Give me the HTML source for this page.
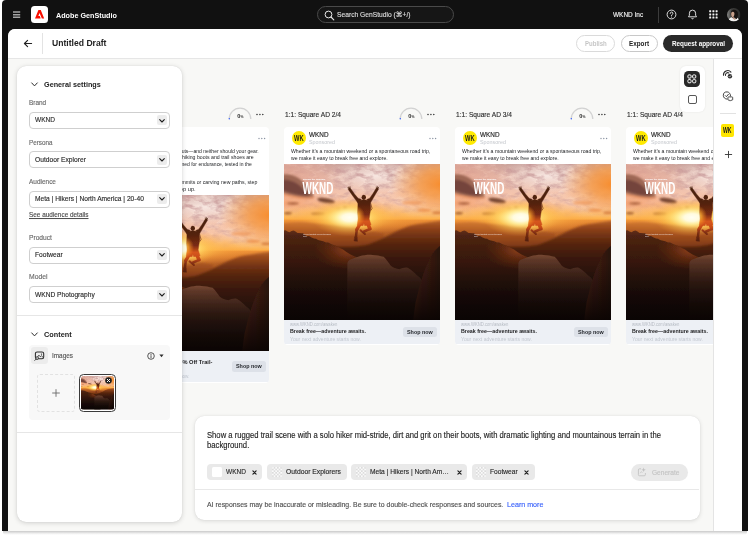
<!DOCTYPE html>
<html lang="en"><head><meta charset="utf-8"><title>Adobe GenStudio</title>
<style>
*{box-sizing:border-box;margin:0;padding:0}
html,body{width:750px;height:535px;overflow:hidden;background:#fff}
body{will-change:transform;font-family:"Liberation Sans",sans-serif;position:relative;-webkit-font-smoothing:antialiased}
.t{position:absolute;white-space:nowrap;transform-origin:0 50%;display:block}
svg{position:absolute;overflow:visible}
.abs{position:absolute}
</style></head>
<body>
<svg width="0" height="0" style="left:0;top:0"><defs><linearGradient id="pSky" x1="0" y1="0" x2="0" y2="1">
<stop offset="0" stop-color="#c7a09a"/><stop offset="0.08" stop-color="#e0b4a6"/><stop offset="0.18" stop-color="#f3c4ae"/>
<stop offset="0.25" stop-color="#f8c09c"/><stop offset="0.29" stop-color="#fcc48c"/><stop offset="0.33" stop-color="#fdbc68"/><stop offset="0.352" stop-color="#fdb04a"/>
<stop offset="0.362" stop-color="#ee9238"/><stop offset="0.40" stop-color="#d87a2e"/><stop offset="0.44" stop-color="#b86226"/><stop offset="0.52" stop-color="#9a4c1e"/><stop offset="0.66" stop-color="#5a2810"/><stop offset="1" stop-color="#24110a"/>
</linearGradient>
<radialGradient id="pSun" cx="0" cy="0" r="1" gradientUnits="userSpaceOnUse" gradientTransform="translate(65.500 53.500) scale(72 18)">
<stop offset="0" stop-color="#fffef4"/><stop offset="0.09" stop-color="#fff8c4"/><stop offset="0.2" stop-color="#ffe27a" stop-opacity=".95"/>
<stop offset="0.4" stop-color="#fdc050" stop-opacity=".7"/><stop offset="0.7" stop-color="#fbaa40" stop-opacity=".3"/><stop offset="1" stop-color="#f8a038" stop-opacity="0"/>
</radialGradient>
<radialGradient id="pSun2" cx="0" cy="0" r="1" gradientUnits="userSpaceOnUse" gradientTransform="translate(65.800 53.500) scale(38 19)">
<stop offset="0" stop-color="#fffef2"/><stop offset="0.2" stop-color="#fffbe0" stop-opacity=".98"/><stop offset="0.36" stop-color="#fff0a0" stop-opacity=".88"/><stop offset="0.6" stop-color="#ffd460" stop-opacity=".5"/><stop offset="1" stop-color="#fca838" stop-opacity="0"/>
</radialGradient>
<radialGradient id="pSun3" cx="0" cy="0" r="1" gradientUnits="userSpaceOnUse" gradientTransform="translate(71.500 52.500) scale(9.500 11)">
<stop offset="0" stop-color="#ffe27a" stop-opacity=".95"/><stop offset="0.4" stop-color="#ffae30" stop-opacity=".75"/><stop offset="1" stop-color="#f88a20" stop-opacity="0"/>
</radialGradient>
<radialGradient id="pGlowTL" cx="0" cy="0" r="1" gradientUnits="userSpaceOnUse" gradientTransform="translate(0 14) scale(62 34)">
<stop offset="0" stop-color="#e09a84" stop-opacity=".75"/><stop offset="0.6" stop-color="#eeb09a" stop-opacity=".4"/><stop offset="1" stop-color="#f0b8a4" stop-opacity="0"/>
</radialGradient>
<radialGradient id="pGlowR" cx="0" cy="0" r="1" gradientUnits="userSpaceOnUse" gradientTransform="translate(156 20) scale(50 34)">
<stop offset="0" stop-color="#f78e30"/><stop offset="0.4" stop-color="#f69a44" stop-opacity=".8"/><stop offset="1" stop-color="#f3a257" stop-opacity="0"/>
</radialGradient>
<radialGradient id="pGlowL" cx="0" cy="0" r="1" gradientUnits="userSpaceOnUse" gradientTransform="translate(-4 39) scale(58 11)">
<stop offset="0" stop-color="#f3a070" stop-opacity=".9"/><stop offset="1" stop-color="#f6a878" stop-opacity="0"/>
</radialGradient>
<radialGradient id="pGlowT" cx="0" cy="0" r="1" gradientUnits="userSpaceOnUse" gradientTransform="translate(92 12) scale(52 18)">
<stop offset="0" stop-color="#fbefeb" stop-opacity=".85"/><stop offset="1" stop-color="#fbefeb" stop-opacity="0"/>
</radialGradient>
<radialGradient id="pGlowP" cx="0" cy="0" r="1" gradientUnits="userSpaceOnUse" gradientTransform="translate(122 36) scale(40 14)">
<stop offset="0" stop-color="#f8cdb6" stop-opacity=".8"/><stop offset="1" stop-color="#f8cdb6" stop-opacity="0"/>
</radialGradient>
<linearGradient id="pRidgeR" x1="0" y1="56" x2="0" y2="116" gradientUnits="userSpaceOnUse">
<stop offset="0" stop-color="#b8662e"/><stop offset="0.1" stop-color="#9a4a1d"/><stop offset="0.24" stop-color="#763514"/><stop offset="0.4" stop-color="#56250e"/><stop offset="0.65" stop-color="#381809"/><stop offset="1" stop-color="#2a130a"/>
</linearGradient>
<linearGradient id="pRidgeM" x1="0" y1="57" x2="0" y2="100" gradientUnits="userSpaceOnUse">
<stop offset="0" stop-color="#d07830"/><stop offset="0.3" stop-color="#a4501e"/><stop offset="0.65" stop-color="#703012"/><stop offset="1" stop-color="#4a200e"/>
</linearGradient>
<linearGradient id="pRidgeL" x1="0" y1="64" x2="0" y2="156" gradientUnits="userSpaceOnUse">
<stop offset="0" stop-color="#6c3419"/><stop offset="0.08" stop-color="#4e2412"/><stop offset="0.3" stop-color="#3a1a0e"/><stop offset="0.7" stop-color="#26110a"/><stop offset="1" stop-color="#170a07"/>
</linearGradient>
<radialGradient id="pRidgeLw" cx="0" cy="0" r="1" gradientUnits="userSpaceOnUse" gradientTransform="translate(64 86) scale(34 20)">
<stop offset="0" stop-color="#a0481a" stop-opacity=".8"/><stop offset="0.5" stop-color="#8a3a14" stop-opacity=".4"/><stop offset="1" stop-color="#7a3414" stop-opacity="0"/>
</radialGradient>
<linearGradient id="pRock" x1="0" y1="90" x2="0" y2="156" gradientUnits="userSpaceOnUse">
<stop offset="0" stop-color="#7a4a33"/><stop offset="0.1" stop-color="#5c3627"/><stop offset="0.45" stop-color="#3c2218"/><stop offset="1" stop-color="#1c0f0b"/>
</linearGradient>
<linearGradient id="pMan" x1="0" y1="22" x2="0" y2="79" gradientUnits="userSpaceOnUse">
<stop offset="0" stop-color="#4a2210"/><stop offset="0.3" stop-color="#522110"/><stop offset="0.5" stop-color="#7a2c12"/><stop offset="0.62" stop-color="#d6561c"/><stop offset="0.72" stop-color="#c84a18"/><stop offset="0.82" stop-color="#7e2e12"/><stop offset="1" stop-color="#4a1c0e"/>
</linearGradient>
<linearGradient id="pRockR" x1="128" y1="0" x2="156" y2="0" gradientUnits="userSpaceOnUse">
<stop offset="0" stop-color="#70361e"/><stop offset="0.3" stop-color="#452014"/><stop offset="1" stop-color="#28130d"/>
</linearGradient>
<linearGradient id="pDark" x1="0" y1="98" x2="0" y2="156" gradientUnits="userSpaceOnUse">
<stop offset="0" stop-color="#0a0403" stop-opacity="0"/><stop offset="0.5" stop-color="#0a0403" stop-opacity=".48"/><stop offset="1" stop-color="#0a0403" stop-opacity=".93"/>
</linearGradient>
<filter id="pB1" x="-20%" y="-20%" width="140%" height="140%"><feGaussianBlur stdDeviation="0.900"/></filter>
<filter id="pB2" x="-20%" y="-20%" width="140%" height="140%"><feGaussianBlur stdDeviation="0.800"/></filter>
<filter id="pB3" x="-20%" y="-20%" width="140%" height="140%"><feGaussianBlur stdDeviation="0.280"/></filter>
<filter id="pTex" x="0" y="0" width="100%" height="100%" color-interpolation-filters="sRGB">
<feTurbulence type="fractalNoise" baseFrequency="0.09 0.17" numOctaves="4" seed="7"/>
<feColorMatrix type="matrix" values="0 0 0 0 1  0 0 0 0 0.92  0 0 0 0 0.88  2.000 0 0 0 -1.000"/>
</filter>
<filter id="pTexD" x="0" y="0" width="100%" height="100%" color-interpolation-filters="sRGB">
<feTurbulence type="fractalNoise" baseFrequency="0.10 0.20" numOctaves="4" seed="23"/>
<feColorMatrix type="matrix" values="0 0 0 0 0.780  0 0 0 0 0.600  0 0 0 0 0.600  0 2.400 0 0 -1.050"/>
</filter>
<linearGradient id="pFade" x1="0" y1="0" x2="0" y2="1"><stop offset="0" stop-color="#fff"/><stop offset="0.6" stop-color="#fff" stop-opacity=".6"/><stop offset="1" stop-color="#fff" stop-opacity="0"/></linearGradient>
<mask id="pSkyMask" maskUnits="userSpaceOnUse" x="0" y="0" width="156" height="56"><rect width="156" height="56" fill="url(#pFade)"/></mask>
<clipPath id="pClip"><rect width="156" height="156"/></clipPath>
<path id="pRL" d="M-2 66.800L1.500 66.200L3.500 67.600L5.500 68.200L7.500 67L9.500 66.400L11.500 67.600L13.500 68.900L15 69L17 69.300L19 69.200L21 71L23 72.200L25 72.100L27 73.300L30 74.500L32 74.700L34 76L37 76.800L39 77.300L42 78.400L44 78.600L47 80L50 81.200L53 82.300L56 84L59 85.600L62 87.800L66 90.200L72 93L92 104L92 158L-2 158z"/>
<g id="pManS" stroke-linecap="round" stroke-linejoin="round">
<ellipse cx="79.700" cy="33.300" rx="2.200" ry="2.600" stroke="none"/>
<path d="M64.600 23.600L66.500 24.500L70.400 30L74 34.200L77.200 35.600L74.300 39.800L71.500 35.800L67.500 30.200L64.200 25.400Z" stroke-width="0.400"/>
<path d="M93.900 23.400L92 24.300L88.600 30L85.600 34.200L82.600 35.600L85.900 39.600L88.300 35.600L91.500 30L94.400 25.200Z" stroke-width="0.400"/>
<path d="M63.800 23.300l.9 1.100M65 22.600l.5 1.400M66.300 22.900l-.1 1.300M94.700 23.100l-.9 1.100M93.500 22.400l-.5 1.400M92.200 22.700l.1 1.300" fill="none" stroke-width="0.550"/>
<path d="M74 37.200C76.500 35.500 83 35.500 85.900 37.200L86.500 42L86.700 44.500L85.700 50L85.100 54.900L87 60.800L80.600 61.700L79.800 59.600L79 61.700L73.200 61.400L74.200 54.900L73.700 48Z" stroke-width="0.400"/>
<path d="M76.300 59.500L72.700 65.700" fill="none" stroke-width="3.300"/>
<path d="M72.700 65.700L71.800 73.500" fill="none" stroke-width="2.500"/>
<path d="M70.500 73L70.100 76.900L73.300 77.300L73.100 73.400Z" stroke-width="0.500"/>
<path d="M83.500 59.500L85.900 64.700" fill="none" stroke-width="3.500"/>
<path d="M85.900 64.900L80 67.500" fill="none" stroke-width="2.600"/>
<path d="M76.400 66.200L80.800 70" fill="none" stroke-width="2"/>
<path d="M86.600 39.500L88 44.500L87 46.200" fill="none" stroke-width="0.600"/>
</g>
<mask id="pManM" maskUnits="userSpaceOnUse" x="60" y="20" width="40" height="60"><g fill="#fff" stroke="#fff"><use href="#pManS"/></g></mask>
<g id="photo" clip-path="url(#pClip)">
<rect width="156" height="156" fill="url(#pSky)"/>
<rect width="156" height="70" fill="url(#pGlowT)"/>
<rect width="156" height="70" fill="url(#pGlowP)"/>
<g mask="url(#pSkyMask)"><rect width="156" height="56" filter="url(#pTex)"/><rect width="156" height="56" filter="url(#pTexD)"/></g>
<rect width="156" height="80" fill="url(#pGlowR)"/>
<rect width="70" height="60" fill="url(#pGlowTL)"/>
<rect width="80" height="80" fill="url(#pGlowL)"/>
<g filter="url(#pB1)">
<path d="M-3 11C3 9 10 11 16 15C21 19 27 26 30 32.500C22 35.500 9 32 -3 28.500z" fill="#96604e" opacity=".9"/><path d="M-3 16C3 15 10 17 15 21C19 24.500 23 28.500 26 31.500C18 32.500 8 29.500 -3 26z" fill="#6e4038" opacity=".85"/><path d="M-3 29C6 31.500 18 34 30 33L30 34.500C20 36.500 8 34 -3 31z" fill="#e88a54" opacity=".7"/>
<ellipse cx="42" cy="36.600" rx="9" ry="2.400" fill="#74432f" opacity=".95" transform="rotate(10 42 36.600)"/>
<ellipse cx="34" cy="49.800" rx="7" ry="1.400" fill="#8e4c26" opacity=".9"/>
<ellipse cx="4" cy="49.300" rx="4" ry="1.300" fill="#8e4c26" opacity=".85"/>
<ellipse cx="9" cy="39.500" rx="6" ry="1.400" fill="#a05834" opacity=".75"/>
<ellipse cx="61" cy="44" rx="2.200" ry="1.700" fill="#a05830" opacity=".8"/>
<ellipse cx="54.500" cy="45.500" rx="2" ry="1.100" fill="#aa6030" opacity=".7"/>
<ellipse cx="128" cy="38.800" rx="10" ry="1.800" fill="#ee985c" opacity=".75"/>
<ellipse cx="140" cy="46.200" rx="7" ry="1.500" fill="#ea8c48" opacity=".8"/>
<ellipse cx="153" cy="48.800" rx="5" ry="1.300" fill="#cc7034" opacity=".8"/>
</g>
<rect width="156" height="120" fill="url(#pSun)"/>
<g filter="url(#pB2)">
<path d="M-2 59.500C8 58 18 57.500 28 59C40 60.500 52 61.500 70 63.500L100 70L100 100L-2 100z" fill="url(#pRidgeM)" opacity=".85"/>
<path d="M158 56.500C148 57.500 140 59.500 132 60.500C124 61.500 116 65.500 108 69.500C100 73.500 92 77.500 84 80.500C74 83 60 83.500 40 82L40 125L158 125z" fill="url(#pRidgeR)"/>
</g>
<g filter="url(#pB3)"><use href="#pRL" fill="url(#pRidgeL)"/><use href="#pRL" fill="url(#pRidgeLw)"/></g>
<g filter="url(#pB3)">
<path d="M63 158L63.300 100C63.500 97 64.500 96 66.500 95.400C69.500 94.300 72.500 93.200 75.500 92.300C79.500 91.200 84 90.600 88 90.900C92 91.200 96 91.600 99.500 92.800C102 94.800 104 98.200 106.500 101.600C109 103.700 112 104.900 115.500 105.200C118 104.200 121 102.800 124 103.900C127 105.500 130 108.500 133 111.400C136 113 138 116 139 119L139 158z" fill="url(#pRock)"/>
<path d="M158 80.500C154 83 150 87 147 92C144 97.500 141 104.500 138.500 112C136 120 133.500 130 131.500 138C130.500 145 129.500 151 129 158L158 158z" fill="url(#pRockR)"/>
</g>
<rect y="98" width="156" height="58" fill="url(#pDark)"/>
<rect x="26" y="32" width="80" height="44" fill="url(#pSun2)"/>
<g fill="url(#pMan)" stroke="url(#pMan)" filter="url(#pB3)"><use href="#pManS"/></g>
<rect x="62" y="38" width="28" height="30" fill="url(#pSun3)" mask="url(#pManM)"/>
</g>
<g id="overlay" fill="#fff" font-family="Liberation Sans, sans-serif">
<text x="19" y="15.800" font-size="2.400" font-weight="700" textLength="22.600" lengthAdjust="spacingAndGlyphs">Escape the ordinary.</text>
<text x="18.600" y="30.500" font-size="15.800" font-weight="700" textLength="30.600" lengthAdjust="spacingAndGlyphs">WKND</text>
<text x="19" y="71.100" font-size="1.700" textLength="28" lengthAdjust="spacingAndGlyphs" opacity=".85">The next great hit your next weekend.</text>
<text x="19" y="73.300" font-size="1.700" textLength="4" lengthAdjust="spacingAndGlyphs" opacity=".85">Ping.</text>
</g>
</defs></svg>
<div style="position:absolute;left:3px;top:531px;width:744px;height:4px;background:linear-gradient(#c9c9c9,#f4f4f4 70%,#fff);border-radius:0 0 3px 3px"></div>
<div style="position:absolute;left:2px;top:0px;width:746px;height:531px;background:#111;border-radius:4px 4px 0 0"></div>
<div class="panel" style="position:absolute;left:8px;top:29px;width:734px;height:502px;background:#f8f8f6;border-radius:7px 7px 0 0;overflow:hidden"><svg style="left:219.8px;top:77.8px;" width="24" height="13" viewBox="0 0 24 13"><path d="M1.2 12 A10.8 10.8 0 0 1 22.8 12" fill="none" stroke="#d2d2d2" stroke-width="1.25"/><circle cx="1.3" cy="11.7" r="0.75" fill="#3b63fb"/></svg><span class="t" style="left:229.20000000000002px;top:83px;font-size:5.6px;line-height:6px;height:6px;color:#2a2a2a;font-weight:700;transform:translateY(0.66px);">0</span><span class="t" style="left:232.4px;top:85px;font-size:3.3px;line-height:4px;height:4px;color:#2a2a2a;font-weight:700;transform:translateY(0.86px);">%</span><svg style="left:248.3px;top:83.5px;" width="9" height="3" viewBox="0 0 9 3"><circle cx="1.0" cy="1.5" r="0.8" fill="#3c3c3c"/><circle cx="3.9" cy="1.5" r="0.8" fill="#3c3c3c"/><circle cx="6.8" cy="1.5" r="0.8" fill="#3c3c3c"/></svg><div style="position:absolute;left:105px;top:98px;width:156.2px;height:255.5px;background:#fff;border-radius:4px;overflow:hidden"><div style="position:absolute;left:0px;top:68.3px;width:156.2px;height:156px;"><svg style="left:0;top:0" width="156.2" height="156" viewBox="0 0 156 156" preserveAspectRatio="none"><use href="#photo"/></svg></div><div style="position:absolute;left:0px;top:224.3px;width:156.2px;height:31.2px;background:#edf0f5"></div></div><svg style="left:250px;top:108.0px;" width="9" height="3" viewBox="0 0 9 3"><circle cx="1.0" cy="1.5" r="0.7" fill="#8a93a2"/><circle cx="3.8" cy="1.5" r="0.7" fill="#8a93a2"/><circle cx="6.6" cy="1.5" r="0.7" fill="#8a93a2"/></svg><span class="t" style="left:112.3px;top:118px;font-size:5.75px;line-height:6px;height:6px;color:#1c1e21;transform:translateY(1.00px) scaleX(0.8766);">Mountains don’t take shortcuts—and neither should your gear.</span><span class="t" style="left:112.3px;top:125px;font-size:5.75px;line-height:6px;height:6px;color:#1c1e21;transform:translateY(0.40px) scaleX(0.9015);">Our all-terrain collection of hiking boots and trail shoes are</span><span class="t" style="left:112.3px;top:131px;font-size:5.75px;line-height:6px;height:6px;color:#1c1e21;transform:translateY(0.80px) scaleX(0.8637);">built for the long haul. Designed for endurance, tested in the</span><span class="t" style="left:112.3px;top:138px;font-size:5.75px;line-height:6px;height:6px;color:#1c1e21;transform:translateY(0.19px) scaleX(0.9302);">wild.</span><span class="t" style="left:112.3px;top:150px;font-size:5.75px;line-height:6px;height:6px;color:#1c1e21;transform:translateY(0.30px) scaleX(0.9025);">Whether you’re chasing summits or carving new paths, step</span><span class="t" style="left:112.3px;top:156px;font-size:5.75px;line-height:6px;height:6px;color:#1c1e21;transform:translateY(0.69px) scaleX(0.9866);">into the unknown and step up.</span><span class="t" style="left:110.9px;top:330px;font-size:5.9px;line-height:6px;height:6px;color:#1d1d1f;font-weight:700;transform:scaleX(0.9625);">Step Into Adventure: 15% Off Trail-</span><span class="t" style="left:110.9px;top:337px;font-size:5.9px;line-height:6px;height:6px;color:#1d1d1f;font-weight:700;transform:scaleX(0.8690);">Ready Gear</span><span class="t" style="left:110.9px;top:344px;font-size:5.4px;line-height:6px;height:6px;color:#c3c8d0;transform:translateY(0.30px) scaleX(0.8540);">Gear up for the trail and save now.</span><div style="position:absolute;left:224.2px;top:331.8px;width:33.8px;height:10.8px;background:#dde1e8;border-radius:2.5px"></div><span class="t" style="left:228.2px;top:334px;font-size:5.63px;line-height:6px;height:6px;color:#25282d;font-weight:700;transform:translateY(0.16px) scaleX(0.9593);">Shop now</span><span class="t" style="left:276.7px;top:81px;font-size:8.1px;line-height:9px;height:9px;color:#2c2c2c;-webkit-text-stroke:0.14px;transform:translateY(0.31px) scaleX(0.8181);">1:1: Square AD 2/4</span><svg style="left:390.8px;top:77.8px;" width="24" height="13" viewBox="0 0 24 13"><path d="M1.2 12 A10.8 10.8 0 0 1 22.8 12" fill="none" stroke="#d2d2d2" stroke-width="1.25"/><circle cx="1.3" cy="11.7" r="0.75" fill="#3b63fb"/></svg><span class="t" style="left:400.2px;top:83px;font-size:5.6px;line-height:6px;height:6px;color:#2a2a2a;font-weight:700;transform:translateY(0.66px);">0</span><span class="t" style="left:403.40000000000003px;top:85px;font-size:3.3px;line-height:4px;height:4px;color:#2a2a2a;font-weight:700;transform:translateY(0.86px);">%</span><svg style="left:419.3px;top:83.5px;" width="9" height="3" viewBox="0 0 9 3"><circle cx="1.0" cy="1.5" r="0.8" fill="#3c3c3c"/><circle cx="3.9" cy="1.5" r="0.8" fill="#3c3c3c"/><circle cx="6.8" cy="1.5" r="0.8" fill="#3c3c3c"/></svg><div style="position:absolute;left:276px;top:98px;width:156.2px;height:217.5px;background:#fff;border-radius:4px;overflow:hidden"><div style="position:absolute;left:0px;top:37.3px;width:156.2px;height:156px;"><svg style="left:0;top:0" width="156.2" height="156" viewBox="0 0 156 156" preserveAspectRatio="none"><use href="#photo"/><use href="#overlay"/></svg></div><div style="position:absolute;left:0px;top:193.3px;width:156.2px;height:24.2px;background:#edf0f5"></div></div><svg style="left:283.5px;top:102px;" width="14" height="14" viewBox="0 0 14 14"><circle cx="7" cy="7" r="7" fill="#ffea00"/></svg><span class="t" style="left:286.4px;top:104px;font-size:9.3px;line-height:10px;height:10px;color:#1a1a1a;font-weight:700;transform:translateY(0.32px) scaleX(0.6196);">WK</span><span class="t" style="left:300.8px;top:102px;font-size:7.05px;line-height:7px;height:7px;color:#1c1c1c;-webkit-text-stroke:0.14px;transform:translateY(0.13px) scaleX(0.9053);">WKND</span><span class="t" style="left:300.8px;top:110px;font-size:5.94px;line-height:6px;height:6px;color:#c4c7cc;transform:translateY(0.34px) scaleX(0.9049);">Sponsored</span><svg style="left:421px;top:108.0px;" width="9" height="3" viewBox="0 0 9 3"><circle cx="1.0" cy="1.5" r="0.7" fill="#8a93a2"/><circle cx="3.8" cy="1.5" r="0.7" fill="#8a93a2"/><circle cx="6.6" cy="1.5" r="0.7" fill="#8a93a2"/></svg><span class="t" style="left:283.3px;top:118px;font-size:5.71px;line-height:6px;height:6px;color:#1c1e21;transform:translateY(0.78px) scaleX(0.9049);">Whether it’s a mountain weekend or a spontaneous road trip,</span><span class="t" style="left:283.3px;top:125px;font-size:5.68px;line-height:6px;height:6px;color:#1c1e21;transform:translateY(0.58px) scaleX(0.9044);">we make it easy to break free and explore.</span><span class="t" style="left:281.9px;top:293px;font-size:4.63px;line-height:5px;height:5px;color:#b7bcc4;transform:scaleX(0.9050);">www.WKND.com/awaken</span><span class="t" style="left:281.9px;top:299px;font-size:5.54px;line-height:6px;height:6px;color:#1d1d1f;font-weight:700;transform:translateY(0.34px) scaleX(0.9604);">Break free—adventure awaits.</span><span class="t" style="left:281.9px;top:306px;font-size:5.62px;line-height:6px;height:6px;color:#c3c8d0;transform:translateY(0.76px) scaleX(0.9042);">Your next adventure starts now.</span><div style="position:absolute;left:395.2px;top:297.6px;width:33.8px;height:10.8px;background:#dde1e8;border-radius:2.5px"></div><span class="t" style="left:399.2px;top:300px;font-size:5.63px;line-height:6px;height:6px;color:#25282d;font-weight:700;transform:translateY(0.16px) scaleX(0.9593);">Shop now</span><span class="t" style="left:447.7px;top:81px;font-size:8.1px;line-height:9px;height:9px;color:#2c2c2c;-webkit-text-stroke:0.14px;transform:translateY(0.31px) scaleX(0.8181);">1:1: Square AD 3/4</span><svg style="left:561.8px;top:77.8px;" width="24" height="13" viewBox="0 0 24 13"><path d="M1.2 12 A10.8 10.8 0 0 1 22.8 12" fill="none" stroke="#d2d2d2" stroke-width="1.25"/><circle cx="1.3" cy="11.7" r="0.75" fill="#3b63fb"/></svg><span class="t" style="left:571.1999999999999px;top:83px;font-size:5.6px;line-height:6px;height:6px;color:#2a2a2a;font-weight:700;transform:translateY(0.66px);">0</span><span class="t" style="left:574.4px;top:85px;font-size:3.3px;line-height:4px;height:4px;color:#2a2a2a;font-weight:700;transform:translateY(0.86px);">%</span><svg style="left:590.3px;top:83.5px;" width="9" height="3" viewBox="0 0 9 3"><circle cx="1.0" cy="1.5" r="0.8" fill="#3c3c3c"/><circle cx="3.9" cy="1.5" r="0.8" fill="#3c3c3c"/><circle cx="6.8" cy="1.5" r="0.8" fill="#3c3c3c"/></svg><div style="position:absolute;left:447px;top:98px;width:156.2px;height:217.5px;background:#fff;border-radius:4px;overflow:hidden"><div style="position:absolute;left:0px;top:37.3px;width:156.2px;height:156px;"><svg style="left:0;top:0" width="156.2" height="156" viewBox="0 0 156 156" preserveAspectRatio="none"><use href="#photo"/><use href="#overlay"/></svg></div><div style="position:absolute;left:0px;top:193.3px;width:156.2px;height:24.2px;background:#edf0f5"></div></div><svg style="left:454.5px;top:102px;" width="14" height="14" viewBox="0 0 14 14"><circle cx="7" cy="7" r="7" fill="#ffea00"/></svg><span class="t" style="left:457.4px;top:104px;font-size:9.3px;line-height:10px;height:10px;color:#1a1a1a;font-weight:700;transform:translateY(0.32px) scaleX(0.6196);">WK</span><span class="t" style="left:471.8px;top:102px;font-size:7.05px;line-height:7px;height:7px;color:#1c1c1c;-webkit-text-stroke:0.14px;transform:translateY(0.13px) scaleX(0.9053);">WKND</span><span class="t" style="left:471.8px;top:110px;font-size:5.94px;line-height:6px;height:6px;color:#c4c7cc;transform:translateY(0.34px) scaleX(0.9049);">Sponsored</span><svg style="left:592px;top:108.0px;" width="9" height="3" viewBox="0 0 9 3"><circle cx="1.0" cy="1.5" r="0.7" fill="#8a93a2"/><circle cx="3.8" cy="1.5" r="0.7" fill="#8a93a2"/><circle cx="6.6" cy="1.5" r="0.7" fill="#8a93a2"/></svg><span class="t" style="left:454.3px;top:118px;font-size:5.71px;line-height:6px;height:6px;color:#1c1e21;transform:translateY(0.78px) scaleX(0.9049);">Whether it’s a mountain weekend or a spontaneous road trip,</span><span class="t" style="left:454.3px;top:125px;font-size:5.68px;line-height:6px;height:6px;color:#1c1e21;transform:translateY(0.58px) scaleX(0.9044);">we make it easy to break free and explore.</span><span class="t" style="left:452.9px;top:293px;font-size:4.63px;line-height:5px;height:5px;color:#b7bcc4;transform:scaleX(0.9050);">www.WKND.com/awaken</span><span class="t" style="left:452.9px;top:299px;font-size:5.54px;line-height:6px;height:6px;color:#1d1d1f;font-weight:700;transform:translateY(0.34px) scaleX(0.9604);">Break free—adventure awaits.</span><span class="t" style="left:452.9px;top:306px;font-size:5.62px;line-height:6px;height:6px;color:#c3c8d0;transform:translateY(0.76px) scaleX(0.9042);">Your next adventure starts now.</span><div style="position:absolute;left:566.2px;top:297.6px;width:33.8px;height:10.8px;background:#dde1e8;border-radius:2.5px"></div><span class="t" style="left:570.2px;top:300px;font-size:5.63px;line-height:6px;height:6px;color:#25282d;font-weight:700;transform:translateY(0.16px) scaleX(0.9593);">Shop now</span><span class="t" style="left:618.7px;top:81px;font-size:8.1px;line-height:9px;height:9px;color:#2c2c2c;-webkit-text-stroke:0.14px;transform:translateY(0.31px) scaleX(0.8181);">1:1: Square AD 4/4</span><svg style="left:732.8px;top:77.8px;" width="24" height="13" viewBox="0 0 24 13"><path d="M1.2 12 A10.8 10.8 0 0 1 22.8 12" fill="none" stroke="#d2d2d2" stroke-width="1.25"/><circle cx="1.3" cy="11.7" r="0.75" fill="#3b63fb"/></svg><span class="t" style="left:742.1999999999999px;top:83px;font-size:5.6px;line-height:6px;height:6px;color:#2a2a2a;font-weight:700;transform:translateY(0.66px);">0</span><span class="t" style="left:745.4px;top:85px;font-size:3.3px;line-height:4px;height:4px;color:#2a2a2a;font-weight:700;transform:translateY(0.86px);">%</span><svg style="left:761.3px;top:83.5px;" width="9" height="3" viewBox="0 0 9 3"><circle cx="1.0" cy="1.5" r="0.8" fill="#3c3c3c"/><circle cx="3.9" cy="1.5" r="0.8" fill="#3c3c3c"/><circle cx="6.8" cy="1.5" r="0.8" fill="#3c3c3c"/></svg><div style="position:absolute;left:618px;top:98px;width:156.2px;height:217.5px;background:#fff;border-radius:4px;overflow:hidden"><div style="position:absolute;left:0px;top:37.3px;width:156.2px;height:156px;"><svg style="left:0;top:0" width="156.2" height="156" viewBox="0 0 156 156" preserveAspectRatio="none"><use href="#photo"/><use href="#overlay"/></svg></div><div style="position:absolute;left:0px;top:193.3px;width:156.2px;height:24.2px;background:#edf0f5"></div></div><svg style="left:625.5px;top:102px;" width="14" height="14" viewBox="0 0 14 14"><circle cx="7" cy="7" r="7" fill="#ffea00"/></svg><span class="t" style="left:628.4px;top:104px;font-size:9.3px;line-height:10px;height:10px;color:#1a1a1a;font-weight:700;transform:translateY(0.32px) scaleX(0.6196);">WK</span><span class="t" style="left:642.8px;top:102px;font-size:7.05px;line-height:7px;height:7px;color:#1c1c1c;-webkit-text-stroke:0.14px;transform:translateY(0.13px) scaleX(0.9053);">WKND</span><span class="t" style="left:642.8px;top:110px;font-size:5.94px;line-height:6px;height:6px;color:#c4c7cc;transform:translateY(0.34px) scaleX(0.9049);">Sponsored</span><svg style="left:763px;top:108.0px;" width="9" height="3" viewBox="0 0 9 3"><circle cx="1.0" cy="1.5" r="0.7" fill="#8a93a2"/><circle cx="3.8" cy="1.5" r="0.7" fill="#8a93a2"/><circle cx="6.6" cy="1.5" r="0.7" fill="#8a93a2"/></svg><span class="t" style="left:625.3px;top:118px;font-size:5.71px;line-height:6px;height:6px;color:#1c1e21;transform:translateY(0.78px) scaleX(0.9049);">Whether it’s a mountain weekend or a spontaneous road trip,</span><span class="t" style="left:625.3px;top:125px;font-size:5.68px;line-height:6px;height:6px;color:#1c1e21;transform:translateY(0.58px) scaleX(0.9044);">we make it easy to break free and explore.</span><span class="t" style="left:623.9px;top:293px;font-size:4.63px;line-height:5px;height:5px;color:#b7bcc4;transform:scaleX(0.9050);">www.WKND.com/awaken</span><span class="t" style="left:623.9px;top:299px;font-size:5.54px;line-height:6px;height:6px;color:#1d1d1f;font-weight:700;transform:translateY(0.34px) scaleX(0.9604);">Break free—adventure awaits.</span><span class="t" style="left:623.9px;top:306px;font-size:5.62px;line-height:6px;height:6px;color:#c3c8d0;transform:translateY(0.76px) scaleX(0.9042);">Your next adventure starts now.</span><div style="position:absolute;left:737.2px;top:297.6px;width:33.8px;height:10.8px;background:#dde1e8;border-radius:2.5px"></div><span class="t" style="left:741.2px;top:300px;font-size:5.63px;line-height:6px;height:6px;color:#25282d;font-weight:700;transform:translateY(0.16px) scaleX(0.9593);">Shop now</span><div style="position:absolute;left:0px;top:0px;width:734px;height:29.5px;background:#fff;border-bottom:1px solid #e6e6e6"></div><svg style="left:15px;top:10px;" width="10" height="9" viewBox="0 0 10 9"><path d="M8.6 4.5H1.6M4.6 1.3L1.4 4.5L4.6 7.7" fill="none" stroke="#222" stroke-width="1.1" stroke-linecap="round" stroke-linejoin="round"/></svg><div style="position:absolute;left:34.3px;top:4px;width:1px;height:20.5px;background:#e3e3e3"></div><span class="t" style="left:44px;top:9px;font-size:8.96px;line-height:10px;height:10px;color:#222;font-weight:700;transform:translateY(0.43px) scaleX(0.9604);">Untitled Draft</span><div style="position:absolute;left:568.3px;top:6.200000000000003px;width:39px;height:16.4px;border:1px solid #dadada;border-radius:9px;background:#fff"></div><span class="t" style="left:576.9px;top:10px;font-size:6.29px;line-height:7px;height:7px;color:#c6c6c6;font-weight:700;transform:translateY(0.54px) scaleX(0.9597);">Publish</span><div style="position:absolute;left:612.8px;top:6.200000000000003px;width:37px;height:16.4px;border:1px solid #c8c8c8;border-radius:9px;background:#fff"></div><span class="t" style="left:621.3px;top:10px;font-size:6.58px;line-height:7px;height:7px;color:#222;font-weight:700;transform:translateY(0.61px) scaleX(0.9597);">Export</span><div style="position:absolute;left:655px;top:6.200000000000003px;width:70.4px;height:16.4px;border-radius:9px;background:#292929"></div><span class="t" style="left:663.8px;top:10px;font-size:6.58px;line-height:7px;height:7px;color:#fff;font-weight:700;transform:translateY(0.61px) scaleX(0.9599);">Request approval</span><div style="position:absolute;left:704.5px;top:29.5px;width:29.5px;height:473px;background:#fff;border-left:1px solid #e4e4e4"></div><svg style="left:713px;top:38px;" width="14" height="13" viewBox="0 0 14 13"><path d="M2.5 8.2A4.2 4.2 0 0 1 9.9 5.1" fill="none" stroke="#2c2c2c" stroke-width="1.15" stroke-linecap="round"/><path d="M4.5 8.4A2.3 2.3 0 0 1 7.9 6.0" fill="none" stroke="#2c2c2c" stroke-width="1.1" stroke-linecap="round"/><circle cx="8.9" cy="9.3" r="2.2" fill="#2c2c2c"/><path d="M7.9 9.4l0.7 0.7l1.3-1.5" fill="none" stroke="#fff" stroke-width="0.65" stroke-linecap="round" stroke-linejoin="round"/></svg><svg style="left:713px;top:61px;" width="14" height="13" viewBox="0 0 14 13"><path d="M9.5 5.9A3.6 3.6 0 1 0 5.9 9.1" fill="none" stroke="#2c2c2c" stroke-width="0.9" stroke-linecap="round"/><path d="M4.3 5.6l1.1 1.1l2-2.4" fill="none" stroke="#2c2c2c" stroke-width="0.9" stroke-linecap="round" stroke-linejoin="round"/><path d="M7.7 6.9h3.2a0.8 0.8 0 0 1 .8 .8v1.7a0.8 0.8 0 0 1 -.8 .8h-0.9l-0.8 0.9l-0.7-0.9h-0.8a0.8 0.8 0 0 1 -.8-.8v-1.700a0.8 0.8 0 0 1 .8-.8z" fill="#fff" stroke="#2c2c2c" stroke-width="0.85" stroke-linejoin="round"/></svg><div style="position:absolute;left:711.5px;top:84px;width:16.5px;height:1px;background:#e2e2e2"></div><div style="position:absolute;left:713.2px;top:94.6px;width:13px;height:13px;background:#ffe600;border-radius:2px"></div><span class="t" style="left:715.4px;top:96px;font-size:8.4px;line-height:10px;height:10px;color:#1a1a1a;font-weight:700;transform:translateY(0.08px) scaleX(0.6145);">WK</span><svg style="left:715.5px;top:120.5px;" width="9" height="9" viewBox="0 0 9 9"><path d="M4.5 1.3V7.7M1.3 4.5H7.7" stroke="#333" stroke-width="0.9" stroke-linecap="round"/></svg><div style="position:absolute;left:671.6px;top:36.8px;width:25.2px;height:46.2px;background:#fff;border-radius:6px;box-shadow:0 0 2px rgba(0,0,0,.09)"></div><div style="position:absolute;left:676.2px;top:41.7px;width:16.3px;height:16.2px;background:#292929;border-radius:4.5px"></div><svg style="left:679.4px;top:44.900000000000006px;" width="10" height="10" viewBox="0 0 10 10"><rect x="0.9" y="0.9" width="3.2" height="3.2" rx="1" fill="none" stroke="#fff" stroke-width="1"/><rect x="0.9" y="5.6" width="3.2" height="3.2" rx="1" fill="none" stroke="#fff" stroke-width="1"/><rect x="5.6" y="0.9" width="3.2" height="3.2" rx="1" fill="none" stroke="#fff" stroke-width="1"/><rect x="5.6" y="5.6" width="3.2" height="3.2" rx="1" fill="none" stroke="#fff" stroke-width="1"/></svg><div style="position:absolute;left:680px;top:66.3px;width:8.6px;height:8.6px;border:1px solid #585858;border-radius:2px"></div><div style="position:absolute;left:186.7px;top:386.8px;width:505.6px;height:104.6px;background:#fff;border-radius:9px;box-shadow:0 1px 4px rgba(0,0,0,.13),0 0 1px rgba(0,0,0,.10)"></div><span class="t" style="left:199px;top:400px;font-size:8.48px;line-height:10px;height:10px;color:#1f1f1f;-webkit-text-stroke:0.14px;transform:translateY(0.50px) scaleX(0.9047);">Show a rugged trail scene with a solo hiker mid-stride, dirt and grit on their boots, with dramatic lighting and mountainous terrain in the</span><span class="t" style="left:199px;top:411px;font-size:8.49px;line-height:10px;height:10px;color:#1f1f1f;-webkit-text-stroke:0.14px;transform:translateY(0.41px) scaleX(0.9052);">background.</span><div style="position:absolute;left:199px;top:434.8px;width:55.3px;height:16.4px;background:#e9e9e9;border-radius:4px"></div><div style="position:absolute;left:204px;top:438px;width:10px;height:10px;background:#fff;border-radius:1.5px"></div><span class="t" style="left:217.8px;top:438px;font-size:7.23px;line-height:9px;height:9px;color:#2a2a2a;-webkit-text-stroke:0.14px;transform:translateY(0.38px) scaleX(0.9054);">WKND</span><svg style="left:244.0px;top:440.7px;" width="5" height="5" viewBox="0 0 5 5"><path d="M0.9 0.9L4.1 4.1M4.1 0.9L0.9 4.1" stroke="#1c1c1c" stroke-width="1.15" stroke-linecap="round"/></svg><div style="position:absolute;left:259px;top:434.8px;width:79.6px;height:16.4px;background:#e9e9e9;border-radius:4px"></div><div style="position:absolute;left:264px;top:438px;width:10px;height:10px;background:conic-gradient(#dcdcdc 25%,#fafafa 0 50%,#dcdcdc 0 75%,#fafafa 0) 0 0/3.34px 3.34px;border-radius:1.5px"></div><span class="t" style="left:277.5px;top:438px;font-size:7.49px;line-height:9px;height:9px;color:#2a2a2a;-webkit-text-stroke:0.14px;transform:translateY(0.45px) scaleX(0.9049);">Outdoor Explorers</span><div style="position:absolute;left:343.3px;top:434.8px;width:115.7px;height:16.4px;background:#e9e9e9;border-radius:4px"></div><div style="position:absolute;left:348px;top:438px;width:10px;height:10px;background:conic-gradient(#dcdcdc 25%,#fafafa 0 50%,#dcdcdc 0 75%,#fafafa 0) 0 0/3.34px 3.34px;border-radius:1.5px"></div><span class="t" style="left:361.8px;top:438px;font-size:7.36px;line-height:9px;height:9px;color:#2a2a2a;-webkit-text-stroke:0.14px;transform:translateY(0.41px) scaleX(0.9054);">Meta | Hikers | North Am…</span><svg style="left:448.5px;top:440.7px;" width="5" height="5" viewBox="0 0 5 5"><path d="M0.9 0.9L4.1 4.1M4.1 0.9L0.9 4.1" stroke="#1c1c1c" stroke-width="1.15" stroke-linecap="round"/></svg><div style="position:absolute;left:463.7px;top:434.8px;width:63px;height:16.4px;background:#e9e9e9;border-radius:4px"></div><div style="position:absolute;left:468px;top:438px;width:10px;height:10px;background:conic-gradient(#dcdcdc 25%,#fafafa 0 50%,#dcdcdc 0 75%,#fafafa 0) 0 0/3.34px 3.34px;border-radius:1.5px"></div><span class="t" style="left:482.3px;top:438px;font-size:7.34px;line-height:9px;height:9px;color:#2a2a2a;-webkit-text-stroke:0.14px;transform:translateY(0.41px) scaleX(0.9053);">Footwear</span><svg style="left:516.1px;top:440.7px;" width="5" height="5" viewBox="0 0 5 5"><path d="M0.9 0.9L4.1 4.1M4.1 0.9L0.9 4.1" stroke="#1c1c1c" stroke-width="1.15" stroke-linecap="round"/></svg><div style="position:absolute;left:622.6px;top:434.8px;width:57px;height:16.8px;background:#e9e9e9;border-radius:8.5px"></div><svg style="left:629px;top:438.2px;" width="10" height="10" viewBox="0 0 10 10"><path d="M3.6 1.8H2.6a1.2 1.2 0 0 0 -1.2 1.2v4.6a1.2 1.2 0 0 0 1.2 1.2h4.6a1.2 1.2 0 0 0 1.2-1.2V6.4" fill="none" stroke="#c2c2c2" stroke-width="0.9" stroke-linecap="round"/><path d="M6.6 0.6l.6 1.6l1.6 .6l-1.6 .6l-.6 1.6l-.6-1.6l-1.6-.6l1.6-.6z" fill="#c2c2c2"/><path d="M3.2 6.2l1.2-1.6l1 1.2" fill="none" stroke="#c2c2c2" stroke-width="0.7"/></svg><span class="t" style="left:643.5px;top:438px;font-size:7.29px;line-height:9px;height:9px;color:#c4c4c4;-webkit-text-stroke:0.14px;transform:translateY(0.70px) scaleX(0.9047);">Generate</span><div style="position:absolute;left:187px;top:459.8px;width:504px;height:1px;background:#e8e8e8"></div><span class="t" style="left:199px;top:470px;font-size:7.67px;line-height:9px;height:9px;color:#505050;-webkit-text-stroke:0.14px;transform:translateY(0.99px) scaleX(0.9053);">AI responses may be inaccurate or misleading. Be sure to double-check responses and sources.</span><span class="t" style="left:498.5px;top:471px;font-size:7.86px;line-height:9px;height:9px;color:#3b63fb;-webkit-text-stroke:0.14px;transform:translateY(0.04px) scaleX(0.9056);">Learn more</span><div style="position:absolute;left:8.8px;top:37px;width:165.5px;height:456.3px;background:#fff;border-radius:9px;box-shadow:0 1px 5px rgba(0,0,0,.16),0 0 1px rgba(0,0,0,.12)"></div><svg style="left:22.8px;top:53.0px;" width="7" height="5" viewBox="0 0 7 5"><path d="M0.7 0.9L3.5 3.9L6.3 0.9" fill="none" stroke="#2c2c2c" stroke-width="1" stroke-linecap="round" stroke-linejoin="round"/></svg><span class="t" style="left:35.5px;top:50px;font-size:7.55px;line-height:9px;height:9px;color:#222;font-weight:700;transform:translateY(0.76px) scaleX(0.9601);">General settings</span><span class="t" style="left:21px;top:69px;font-size:7.12px;line-height:8px;height:8px;color:#6a6a6a;-webkit-text-stroke:0.14px;transform:translateY(0.95px) scaleX(0.9052);">Brand</span><div style="position:absolute;left:21px;top:83.1px;width:140.6px;height:16.8px;border:1px solid #cfcfcf;border-radius:4px;background:#fff"></div><span class="t" style="left:27.299999999999997px;top:86px;font-size:7.23px;line-height:9px;height:9px;color:#2a2a2a;-webkit-text-stroke:0.14px;transform:translateY(0.48px) scaleX(0.9054);">WKND</span><div style="position:absolute;left:148.6px;top:86.3px;width:10px;height:10.2px;background:#ececec;border-radius:2px"></div><svg style="left:150.6px;top:89.5px;" width="6" height="4" viewBox="0 0 6 4"><path d="M0.7 0.7L3 3L5.3 0.7" fill="none" stroke="#1f1f1f" stroke-width="1.1" stroke-linecap="round" stroke-linejoin="round"/></svg><span class="t" style="left:21px;top:109px;font-size:6.97px;line-height:7px;height:7px;color:#6a6a6a;-webkit-text-stroke:0.14px;transform:translateY(0.71px) scaleX(0.9052);">Persona</span><div style="position:absolute;left:21px;top:122.30000000000001px;width:140.6px;height:16.8px;border:1px solid #cfcfcf;border-radius:4px;background:#fff"></div><span class="t" style="left:27.299999999999997px;top:125px;font-size:7.4px;line-height:9px;height:9px;color:#2a2a2a;-webkit-text-stroke:0.14px;transform:translateY(0.72px) scaleX(0.9050);">Outdoor Explorer</span><div style="position:absolute;left:148.6px;top:125.5px;width:10px;height:10.2px;background:#ececec;border-radius:2px"></div><svg style="left:150.6px;top:128.7px;" width="6" height="4" viewBox="0 0 6 4"><path d="M0.7 0.7L3 3L5.3 0.7" fill="none" stroke="#1f1f1f" stroke-width="1.1" stroke-linecap="round" stroke-linejoin="round"/></svg><span class="t" style="left:21px;top:148px;font-size:7.15px;line-height:8px;height:8px;color:#6a6a6a;-webkit-text-stroke:0.14px;transform:translateY(0.96px) scaleX(0.9056);">Audience</span><div style="position:absolute;left:21px;top:161.8px;width:140.6px;height:16.8px;border:1px solid #cfcfcf;border-radius:4px;background:#fff"></div><span class="t" style="left:27.299999999999997px;top:165px;font-size:7.35px;line-height:9px;height:9px;color:#2a2a2a;-webkit-text-stroke:0.14px;transform:translateY(0.21px) scaleX(0.9045);">Meta | Hikers | North America | 20-40</span><div style="position:absolute;left:148.6px;top:165px;width:10px;height:10.2px;background:#ececec;border-radius:2px"></div><svg style="left:150.6px;top:168.2px;" width="6" height="4" viewBox="0 0 6 4"><path d="M0.7 0.7L3 3L5.3 0.7" fill="none" stroke="#1f1f1f" stroke-width="1.1" stroke-linecap="round" stroke-linejoin="round"/></svg><span class="t" style="left:21px;top:182px;font-size:7.09px;line-height:8px;height:8px;color:#4a4a4a;-webkit-text-stroke:0.14px;transform:translateY(0.04px) scaleX(0.9054);text-decoration:underline;text-decoration-thickness:0.6px;text-underline-offset:1px;">See audience details</span><span class="t" style="left:21px;top:203px;font-size:7.37px;line-height:9px;height:9px;color:#6a6a6a;-webkit-text-stroke:0.14px;transform:translateY(0.92px) scaleX(0.9055);">Product</span><div style="position:absolute;left:21px;top:218.0px;width:140.6px;height:16.8px;border:1px solid #cfcfcf;border-radius:4px;background:#fff"></div><span class="t" style="left:27.299999999999997px;top:221px;font-size:7.34px;line-height:9px;height:9px;color:#2a2a2a;-webkit-text-stroke:0.14px;transform:translateY(0.41px) scaleX(0.9053);">Footwear</span><div style="position:absolute;left:148.6px;top:221.2px;width:10px;height:10.2px;background:#ececec;border-radius:2px"></div><svg style="left:150.6px;top:224.39999999999998px;" width="6" height="4" viewBox="0 0 6 4"><path d="M0.7 0.7L3 3L5.3 0.7" fill="none" stroke="#1f1f1f" stroke-width="1.1" stroke-linecap="round" stroke-linejoin="round"/></svg><span class="t" style="left:21px;top:243px;font-size:7.51px;line-height:9px;height:9px;color:#6a6a6a;-webkit-text-stroke:0.14px;transform:translateY(0.45px) scaleX(0.9044);">Model</span><div style="position:absolute;left:21px;top:257.3px;width:140.6px;height:16.8px;border:1px solid #cfcfcf;border-radius:4px;background:#fff"></div><span class="t" style="left:27.299999999999997px;top:260px;font-size:7.34px;line-height:9px;height:9px;color:#2a2a2a;-webkit-text-stroke:0.14px;transform:translateY(0.71px) scaleX(0.9048);">WKND Photography</span><div style="position:absolute;left:148.6px;top:260.5px;width:10px;height:10.2px;background:#ececec;border-radius:2px"></div><svg style="left:150.6px;top:263.7px;" width="6" height="4" viewBox="0 0 6 4"><path d="M0.7 0.7L3 3L5.3 0.7" fill="none" stroke="#1f1f1f" stroke-width="1.1" stroke-linecap="round" stroke-linejoin="round"/></svg><div style="position:absolute;left:8.8px;top:286px;width:165.5px;height:1px;background:#e6e6e6"></div><svg style="left:22.8px;top:303.0px;" width="7" height="5" viewBox="0 0 7 5"><path d="M0.7 0.9L3.5 3.9L6.3 0.9" fill="none" stroke="#2c2c2c" stroke-width="1" stroke-linecap="round" stroke-linejoin="round"/></svg><span class="t" style="left:35.5px;top:300px;font-size:7.61px;line-height:9px;height:9px;color:#222;font-weight:700;transform:translateY(0.78px) scaleX(0.9602);">Content</span><div style="position:absolute;left:21px;top:316px;width:140.8px;height:75px;background:#f8f8f8;border-radius:4px"></div><div style="position:absolute;left:23px;top:318px;width:16.6px;height:16.8px;background:#ececec;border-radius:3px"></div><svg style="left:26px;top:321.5px;" width="11" height="10" viewBox="0 0 11 10"><rect x="1.4" y="0.9" width="8.3" height="6.9" rx="1.7" fill="none" stroke="#2c2c2c" stroke-width="1.05"/><path d="M3.4 6.2l1.5-2l1.4 1.500l1.1-0.900l1.700 1.600" fill="none" stroke="#2c2c2c" stroke-width="0.85" stroke-linejoin="round"/><circle cx="7.5" cy="3.1" r="0.65" fill="#2c2c2c"/><circle cx="3.1" cy="7.1" r="1.35" fill="#ececec" stroke="#2c2c2c" stroke-width="0.85"/><path d="M2.1 8.100L0.800 9.400" stroke="#2c2c2c" stroke-width="0.9" stroke-linecap="round"/></svg><span class="t" style="left:44px;top:323px;font-size:7.08px;line-height:8px;height:8px;color:#555;-webkit-text-stroke:0.14px;transform:translateY(0.34px) scaleX(0.9045);">Images</span><svg style="left:138.5px;top:322.5px;" width="8" height="8" viewBox="0 0 8 8"><circle cx="4" cy="4" r="3.3" fill="none" stroke="#2c2c2c" stroke-width="0.8"/><path d="M4 3.6V5.8" stroke="#2c2c2c" stroke-width="0.8" stroke-linecap="round"/><circle cx="4" cy="2.4" r="0.5" fill="#2c2c2c"/></svg><svg style="left:150.6px;top:325.2px;" width="5" height="4" viewBox="0 0 5 4"><path d="M0.4 0.5H4.6L2.5 3.3z" fill="#2c2c2c"/></svg><div style="position:absolute;left:29px;top:345px;width:38px;height:38px;border:1px dashed #e2e2e2;border-radius:3px"></div><svg style="left:44px;top:360px;" width="8" height="8" viewBox="0 0 8 8"><path d="M4 0.6V7.4M0.6 4H7.4" stroke="#6a6a6a" stroke-width="0.9" stroke-linecap="round"/></svg><div style="position:absolute;left:70.8px;top:345.2px;width:37px;height:37.4px;border:1px solid #3a3a3a;border-radius:4.5px;background:#fff"></div><div style="position:absolute;left:72.8px;top:347.2px;width:33px;height:33.4px;border-radius:3px;overflow:hidden"><svg style="left:0;top:0" width="33" height="33.4" viewBox="0 0 156 156" preserveAspectRatio="none"><use href="#photo"/></svg></div><svg style="left:97.2px;top:348.4px;" width="7" height="7" viewBox="0 0 7 7"><circle cx="3.5" cy="3.5" r="3.3" fill="#1e1e1e"/><path d="M2.2 2.2L4.8 4.8M4.8 2.2L2.2 4.8" stroke="#fff" stroke-width="1" stroke-linecap="round"/></svg><div style="position:absolute;left:8.8px;top:403.3px;width:165.5px;height:1px;background:#e6e6e6"></div></div>
<svg style="left:13px;top:10.8px" width="8" height="8" viewBox="0 0 8 8"><path d="M0 1H7.200M0 3.650H7.200M0 6.300H7.200" stroke="#a4a4a4" stroke-width="1.5"/></svg>
<div style="position:absolute;left:31px;top:6.4px;width:16.6px;height:16.2px;background:#fff;border-radius:3.5px"></div>
<svg style="left:34.8px;top:10.2px" width="9.2" height="8.4" viewBox="0 0 94 86"><path d="M35 0H59L94 86H70L47 30L34 62H49L58 86H0z" fill="#fa0f00"/></svg>
<span class="t" style="left:56px;top:10px;font-size:7.53px;line-height:9px;height:9px;color:#fff;font-weight:700;transform:translateY(0.76px) scaleX(0.9594);">Adobe GenStudio</span>
<div style="position:absolute;left:317px;top:6px;width:136.5px;height:17px;border:1px solid #4a4a4a;border-radius:9px;background:#161616"></div>
<svg style="left:323.6px;top:9.6px" width="11" height="11" viewBox="0 0 11 11"><circle cx="4.5" cy="4.5" r="3.4" fill="none" stroke="#e8e8e8" stroke-width="1"/><path d="M7 7L9.8 9.8" stroke="#e8e8e8" stroke-width="1.1" stroke-linecap="round"/></svg>
<span class="t" style="left:337.4px;top:10px;font-size:7.42px;line-height:9px;height:9px;color:#dcdcdc;-webkit-text-stroke:0.14px;transform:translateY(0.13px) scaleX(0.9045);font-family:'Liberation Sans','DejaVu Sans',sans-serif;">Search GenStudio (⌘+/)</span>
<span class="t" style="left:613px;top:10px;font-size:7.15px;line-height:8px;height:8px;color:#f0f0f0;-webkit-text-stroke:0.14px;transform:translateY(0.96px) scaleX(0.9050);">WKND Inc</span>
<div style="position:absolute;left:658px;top:7px;width:1px;height:15.5px;background:#3c3c3c"></div>
<svg style="left:665.6px;top:9px" width="11" height="11" viewBox="0 0 11 11"><circle cx="5.5" cy="5.5" r="4.4" fill="none" stroke="#f0f0f0" stroke-width="0.9"/><path d="M4.2 4.4a1.35 1.35 0 1 1 2 1.2c-.5 .3-.7 .5-.7 1" fill="none" stroke="#f0f0f0" stroke-width="0.9" stroke-linecap="round"/><circle cx="5.5" cy="8" r="0.55" fill="#f0f0f0"/></svg>
<svg style="left:687px;top:9.2px" width="11" height="11" viewBox="0 0 11 11"><path d="M5.5 1.1a3.1 3.1 0 0 0 -3.1 3.1v2L1.5 7.8h8L8.6 6.2v-2A3.1 3.1 0 0 0 5.5 1.100z" fill="none" stroke="#f0f0f0" stroke-width="0.9" stroke-linejoin="round"/><path d="M4.5 9.2a1.1 1.1 0 0 0 2 0" fill="none" stroke="#f0f0f0" stroke-width="0.9" stroke-linecap="round"/></svg>
<svg style="left:708.5px;top:10.1px" width="9" height="9" viewBox="0 0 9 9"><rect x="0.2" y="0.2" width="2" height="2" rx="0.4" fill="#f4f4f4"/><rect x="0.2" y="3.4" width="2" height="2" rx="0.4" fill="#f4f4f4"/><rect x="0.2" y="6.6" width="2" height="2" rx="0.4" fill="#f4f4f4"/><rect x="3.4" y="0.2" width="2" height="2" rx="0.4" fill="#f4f4f4"/><rect x="3.4" y="3.4" width="2" height="2" rx="0.4" fill="#f4f4f4"/><rect x="3.4" y="6.6" width="2" height="2" rx="0.4" fill="#f4f4f4"/><rect x="6.6" y="0.2" width="2" height="2" rx="0.4" fill="#f4f4f4"/><rect x="6.6" y="3.4" width="2" height="2" rx="0.4" fill="#f4f4f4"/><rect x="6.6" y="6.6" width="2" height="2" rx="0.4" fill="#f4f4f4"/></svg>
<svg style="left:726.9px;top:8px" width="13.5" height="13.5" viewBox="0 0 126 126"><defs><clipPath id="avc"><circle cx="63" cy="63" r="63"/></clipPath><linearGradient id="avg" x1="0" y1="0" x2="1" y2="0"><stop offset="0" stop-color="#8a8a88"/><stop offset="0.35" stop-color="#3c3c3a"/><stop offset="1" stop-color="#2a2a29"/></linearGradient></defs><g clip-path="url(#avc)"><rect width="126" height="126" fill="url(#avg)"/><path d="M10 126C14 96 36 84 58 84C84 82 112 92 122 126z" fill="#f1efee"/><path d="M40 30C54 8 92 12 100 40C106 62 100 86 92 100C84 104 74 100 70 92C60 96 44 90 40 76C34 60 34 44 40 30z" fill="#17110f"/><path d="M40 44C46 34 62 32 68 44C72 56 68 76 58 84C50 88 42 82 40 70C38 60 38 52 40 44z" fill="#c9a08a"/><path d="M60 82C66 92 74 100 84 104L70 110L52 96z" fill="#b98e78"/></g></svg>
</body></html>
